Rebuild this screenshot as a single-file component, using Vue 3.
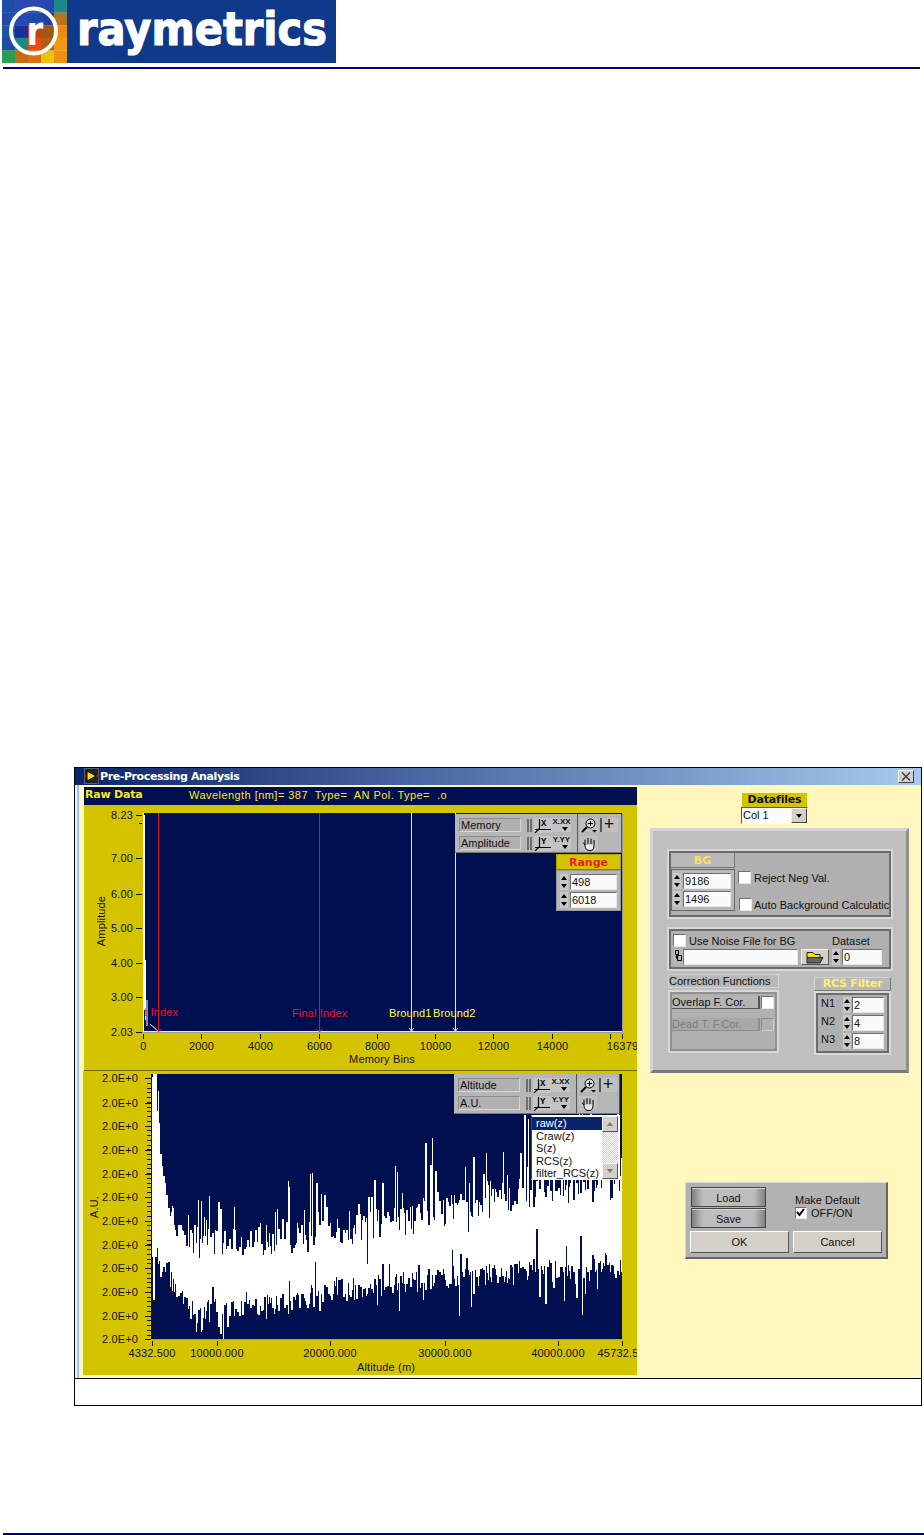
<script setup>
function rng(seed) {
  let a = seed
  return () => {
    a |= 0; a = (a + 0x6d2b79f5) | 0
    let t = Math.imul(a ^ (a >>> 15), 1 | a)
    t = (t + Math.imul(t ^ (t >>> 7), 61 | t)) ^ t
    return ((t ^ (t >>> 14)) >>> 0) / 4294967296
  }
}
function lerp(pts, x) {
  for (let i = 1; i < pts.length; i++) {
    if (x <= pts[i][0]) {
      const [a, b] = pts[i - 1], [c, d] = pts[i]
      return b + ((d - b) * (x - a)) / (c - a)
    }
  }
  return pts[pts.length - 1][1]
}
const upper = [[151,1075],[157,1075],[160,1150],[170,1210],[185,1245],[300,1238],[400,1222],[500,1198],[621,1186]]
const lower = [[151,1250],[160,1262],[175,1290],[190,1310],[250,1306],[300,1300],[320,1292],[400,1282],[500,1272],[621,1262]]
const r = rng(387)
let d = ''
let x = 152
while (x < 622) {
  const w = r() < 0.35 ? 2 : 1
  const reach = 0.55 + (0.65 * (x - 150)) / 470
  let top = lerp(upper, x) + (r() - 0.5) * 30 - Math.pow(r(), 6) * 85 * reach
  let bot = lerp(lower, x) + (r() - 0.5) * 22 + Math.pow(r(), 9) * 40
  if (r() < 0.07) bot -= r() * 30
  if (r() < 0.07) top += r() * 28
  for (let i = 0; i < w && x < 622; i++, x++) {
    d += `M${x + 0.5} ${Math.max(1074, top).toFixed(0)}V${Math.min(1339, bot).toFixed(0)}`
  }
}
const noisePath = d

const tiles = [
  ['#1f4aa8','#2a4ab0','#2a4ab0','#2b46ad','#1b8a88'],
  ['#1f4aa8','#2a46b0','#1b4aa8','#2040a0','#b8741a'],
  ['#1c55a8','#1a2f9a','#c04510','#a05510','#f08a10'],
  ['#1f49a5','#1a8a80','#ee4a10','#b06010','#f09a10'],
  ['#26a050','#c86a10','#d87010','#eec010','#f09010']
].flatMap((row, j) => row.map((fill, i) => ({ fill, x: 2 + i * 13, y: j * 12.6, k: `${i}-${j}` })))

const y1Ticks = [
  { y: 815, t: '8.23' }, { y: 858, t: '7.00' }, { y: 894, t: '6.00' },
  { y: 928, t: '5.00' }, { y: 963, t: '4.00' }, { y: 997, t: '3.00' }, { y: 1032, t: '2.03' }
]
const x1Ticks = [
  { x: 143, t: '0' }, { x: 201, t: '2000' }, { x: 260, t: '4000' }, { x: 319, t: '6000' },
  { x: 377, t: '8000' }, { x: 435, t: '10000' }, { x: 493, t: '12000' }, { x: 552, t: '14000' },
  { x: 610, t: '' }, { x: 622, t: '16379' }
]
const y2Ticks = [1078, 1103, 1126, 1150, 1174, 1197, 1221, 1245, 1268, 1292, 1316, 1339]
const y2Minor = []
for (let y = 1078; y < 1339; y += 4.75) y2Minor.push(Math.round(y))
const x2Ticks = [
  { x: 152, t: '4332.500', l: 152 }, { x: 217, t: '10000.000', l: 217 }, { x: 330, t: '20000.000', l: 330 },
  { x: 445, t: '30000.000', l: 445 }, { x: 558, t: '40000.000', l: 558 }, { x: 622, t: '45732.5', l: 618 }
]
const listItems = ['raw(z)', 'Craw(z)', 'S(z)', 'RCS(z)', 'filter_RCS(z)']
const filters = [{ n: 'N1', v: '2' }, { n: 'N2', v: '4' }, { n: 'N3', v: '8' }]
</script>

<template>
  <div class="page">
    <svg class="defs" width="0" height="0" aria-hidden="true">
      <symbol id="axis" viewBox="0 0 26 15">
        <rect x="8" width="18" height="15" fill="#c4c4c4" />
        <path d="M1 1h2v13H1zM4 1h2v13H4z" fill="#6d6d6d" />
        <path d="M13.500 1V11M9 11.500H25M13 11L9 15" stroke="#000" fill="none" stroke-width="1.200" />
      </symbol>
      <symbol id="zoom" viewBox="0 0 18 15">
        <circle cx="10.500" cy="5.500" r="4.500" fill="#d8d8d8" stroke="#000" />
        <path d="M8 5.500h5M10.500 3v5" stroke="#000" />
        <path d="M7 9L2 14" stroke="#000" stroke-width="2" />
        <path d="M12 12h5l-2.500 2.500z" fill="#000" />
      </symbol>
      <symbol id="hand" viewBox="0 0 18 15">
        <path d="M5 9L3 6.500M5 9V3.500M8 8V2M11 8V2.500M14 8.500V4M5 9C5 13 7 14.500 10 14.500C13 14.500 14 12.500 14 8.500" fill="#e8e8e8" stroke="#000" />
      </symbol>
    </svg>

    <header class="head">
      <svg class="logo" width="336" height="63" viewBox="0 0 336 63" role="img" aria-label="raymetrics">
        <rect x="67" width="269" height="63" fill="#0f3a8c" />
        <rect v-for="c in tiles" :key="c.k" :x="c.x" :y="c.y" width="13" height="12.800" :fill="c.fill" />
        <circle cx="33.500" cy="31" r="22.500" fill="none" stroke="#fff" stroke-width="4" />
        <text transform="translate(35 45) scale(1 1.200)" class="logo-r" text-anchor="middle">r</text>
        <text transform="translate(77 45) scale(1 1.200)" class="logo-t" textLength="250" lengthAdjust="spacingAndGlyphs">raymetrics</text>
      </svg>
    </header>
    <div class="rule top-rule"></div>

    <section class="frame">
      <div class="window">
        <div class="title">
          <svg class="vi" width="15" height="16" viewBox="0 0 15 16">
            <rect x="0.500" y="0.500" width="14" height="15" fill="#222" stroke="#999" stroke-dasharray="1 1" />
            <path d="M3 3L12 8L3 13z" fill="#f7e700" stroke="#000" />
            <path d="M0 8h3M12 8h3" stroke="#e01010" />
          </svg>
          <span class="title-t">Pre-Processing Analysis</span>
          <span class="close"><svg width="14" height="11" viewBox="0 0 14 11"><path d="M3 1.500L11 9.500M11 1.500L3 9.500" stroke="#333" stroke-width="1.200" /></svg></span>
        </div>

        <div class="client">
          <div class="left">
            <div class="raw">
              <span class="raw-h">Raw Data</span>
              <span class="raw-i">Wavelength [nm]= 387&nbsp; Type=&nbsp; AN Pol. Type=&nbsp; .o</span>
            </div>

            <div class="plot p1">
              <svg width="553" height="265" viewBox="84 805 553 265">
                <rect x="143" y="813" width="479" height="219" fill="#000f50" />
                <rect x="143" y="813" width="479" height="1" fill="#111" />
                <rect x="143" y="813" width="1" height="219" fill="#fff" />
                <rect x="622" y="813" width="1" height="220" fill="#9a9a9a" />
                <path d="M144.500 815V1010M145.500 960V1020M147 1000V1026M150 1024L158 1031" stroke="#fff" fill="none" />
                <path d="M158.500 813V1032M319.500 813V1032" stroke="#e01020" />
                <path d="M411.500 813V1032M455.500 813V1032" stroke="#ffff30" />
                <rect x="143" y="1031" width="479" height="1" fill="#ffff30" />
                <rect x="143" y="1032" width="480" height="1" fill="#9a9a9a" />
                <path d="M155 1029l3.500 2.500 3.500-2.500M316 1029l3.500 2.500 3.500-2.500" stroke="#e01020" fill="none" />
                <path d="M409 1028l2.500 3 2.500-3M453 1028l2.500 3 2.500-3" stroke="#ffff30" fill="none" />
                <text x="144" y="1016" class="t red">t Index</text>
                <text x="292" y="1017" class="t red">Final Index</text>
                <text x="389" y="1017" class="t yel">Bround1</text>
                <text x="433" y="1017" class="t yel">Bround2</text>
                <g v-for="k in y1Ticks" :key="k.t">
                  <rect x="136" :y="k.y" width="6" height="1" fill="#111" />
                  <text x="133" :y="k.y + 4" class="t" text-anchor="end">{{ k.t }}</text>
                </g>
                <rect x="139" y="823" width="3" height="1" fill="#111" />
                <g v-for="k in x1Ticks" :key="k.x">
                  <rect :x="k.x" y="1034" width="1" height="5" fill="#111" />
                  <text :x="k.x + 0.500" y="1050" class="t" text-anchor="middle">{{ k.t }}</text>
                </g>
                <text x="382" y="1063" class="t" text-anchor="middle">Memory Bins</text>
                <text transform="translate(105 921) rotate(-90)" class="t" text-anchor="middle">Amplitude</text>
              </svg>

              <div class="pal">
                <div class="pal-a">
                  <div class="pal-r">
                    <span class="pal-f">Memory</span>
                    <svg class="ax" width="26" height="15"><use href="#axis" /><text x="15" y="8" class="mini">X</text></svg>
                    <span class="scale">x.xx<i class="dn"></i></span>
                  </div>
                  <div class="pal-r">
                    <span class="pal-f">Amplitude</span>
                    <svg class="ax" width="26" height="15"><use href="#axis" /><text x="15" y="8" class="mini">Y</text></svg>
                    <span class="scale">y.yy<i class="dn"></i></span>
                  </div>
                </div>
                <div class="pal-b">
                  <div class="pal-r tool-r">
                    <span class="tool"><svg width="18" height="15"><use href="#zoom" /></svg></span>
                    <span class="tool plus">+</span>
                  </div>
                  <div class="pal-r tool-r">
                    <span class="tool"><svg width="18" height="15"><use href="#hand" /></svg></span>
                  </div>
                </div>
              </div>

              <div class="range">
                <div class="range-h">Range</div>
                <div class="range-b">
                  <div class="sf">
                    <span class="spin"><i class="up"></i><i class="dn"></i></span>
                    <span class="num rg">498</span>
                  </div>
                  <div class="sf">
                    <span class="spin"><i class="up"></i><i class="dn"></i></span>
                    <span class="num rg">6018</span>
                  </div>
                </div>
              </div>
            </div>

            <div class="plot p2">
              <svg width="554" height="304" viewBox="83 1071 554 304">
                <rect x="151" y="1074" width="471" height="265" fill="#000f50" />
                <path :d="noisePath" stroke="#fff" stroke-width="1" fill="none" shape-rendering="crispEdges" />
                <rect x="151" y="1339" width="471" height="1" fill="#9a9a9a" />
                <rect v-for="y in y2Minor" :key="'m' + y" x="147" :y="y" width="4" height="1" fill="#111" />
                <g v-for="(y, i) in y2Ticks" :key="i">
                  <rect x="145" :y="y" width="6" height="1" fill="#111" />
                  <text x="138" :y="y + 4" class="t" text-anchor="end">2.0E+0</text>
                </g>
                <g v-for="k in x2Ticks" :key="k.x">
                  <rect :x="k.x" y="1341" width="1" height="5" fill="#111" />
                  <text :x="k.l" y="1357" class="t" text-anchor="middle">{{ k.t }}</text>
                </g>
                <text x="386" y="1371" class="t" text-anchor="middle">Altitude (m)</text>
                <text transform="translate(98 1207) rotate(-90)" class="t" text-anchor="middle">A.U.</text>
              </svg>

              <div class="pal pal2">
                <div class="pal-a">
                  <div class="pal-r">
                    <span class="pal-f">Altitude</span>
                    <svg class="ax" width="26" height="15"><use href="#axis" /><text x="15" y="8" class="mini">X</text></svg>
                    <span class="scale">x.xx<i class="dn"></i></span>
                  </div>
                  <div class="pal-r">
                    <span class="pal-f">A.U.</span>
                    <svg class="ax" width="26" height="15"><use href="#axis" /><text x="15" y="8" class="mini">Y</text></svg>
                    <span class="scale">y.yy<i class="dn"></i></span>
                  </div>
                </div>
                <div class="pal-b">
                  <div class="pal-r tool-r">
                    <span class="tool"><svg width="18" height="15"><use href="#zoom" /></svg></span>
                    <span class="tool plus">+</span>
                  </div>
                  <div class="pal-r tool-r">
                    <span class="tool"><svg width="18" height="15"><use href="#hand" /></svg></span>
                  </div>
                </div>
              </div>

              <div class="list">
                <div class="list-items">
                  <div v-for="(it, i) in listItems" :key="it" class="li" :class="{ sel: i === 0 }">{{ it }}</div>
                </div>
                <div class="sb">
                  <span class="sb-btn"><i class="up mute"></i></span>
                  <span class="sb-track"></span>
                  <span class="sb-btn"><i class="dn mute"></i></span>
                </div>
              </div>
            </div>
          </div>

          <div class="right">
            <div class="dataf">
              <div class="dataf-h">Datafiles</div>
              <div class="combo"><span class="combo-t">Col 1</span><span class="combo-b"><i class="dn"></i></span></div>
            </div>

            <div class="gray">
              <div class="well w-bg">
                <div class="bg-l">
                  <div class="bg-h">BG</div>
                  <div class="bg-b">
                    <div class="sf"><span class="spin"><i class="up"></i><i class="dn"></i></span><span class="num bgn">9186</span></div>
                    <div class="sf"><span class="spin"><i class="up"></i><i class="dn"></i></span><span class="num bgn">1496</span></div>
                  </div>
                </div>
                <div class="bg-r">
                  <label class="ckl first"><span class="ck"></span><span>Reject Neg Val.</span></label>
                  <label class="ckl second"><span class="ck"></span><span>Auto Background Calculatic</span></label>
                </div>
              </div>

              <div class="well w-noise">
                <div class="n-r1">
                  <label class="ckl n-ck"><span class="ck"></span><span>Use Noise File for BG</span></label>
                  <span>Dataset</span>
                </div>
                <div class="n-r2">
                  <span class="path-i"><svg width="10" height="14" viewBox="0 0 10 14"><path d="M2.500 1.500h3v4h-3zM4.500 6.500h4v5h-4zM3.500 5.500v4h1" fill="none" stroke="#000" /></svg></span>
                  <span class="num path-f"></span>
                  <span class="folder"><svg width="20" height="13" viewBox="0 0 20 13"><path d="M2 1.500h6l2 2h5v3H2z" fill="#f8e800" stroke="#222" /><path d="M2 6.500h16l-3 5.500H2z" fill="#666" stroke="#222" /></svg></span>
                  <span class="spin sm"><i class="up"></i><i class="dn"></i></span>
                  <span class="num ds">0</span>
                </div>
              </div>

              <div class="lower">
                <div class="corr">
                  <div class="corr-h">Correction Functions</div>
                  <div class="well corr-b">
                    <div class="corr-r"><span class="corr-btn">Overlap F. Cor.</span><span class="ck"></span></div>
                    <div class="corr-r off"><span class="corr-btn">Dead T. F.Cor.</span><span class="ck"></span></div>
                  </div>
                </div>
                <div class="rcs">
                  <div class="rcs-h">RCS Filter</div>
                  <div class="well rcs-b">
                    <div v-for="f in filters" :key="f.n" class="rcs-r">
                      <span class="rcs-n">{{ f.n }}</span>
                      <span class="spin"><i class="up"></i><i class="dn"></i></span>
                      <span class="num rcs-f">{{ f.v }}</span>
                    </div>
                  </div>
                </div>
              </div>
            </div>

            <div class="load">
              <div class="load-top">
                <div class="load-btns">
                  <span class="lb">Load</span>
                  <span class="lb">Save</span>
                </div>
                <div class="md">
                  <div>Make Default</div>
                  <label class="ckl md-ck">
                    <span class="ck on"><svg width="11" height="11" viewBox="0 0 11 11"><path d="M2 5l2.500 3L9 2" fill="none" stroke="#000" stroke-width="2" /></svg></span>
                    <span>OFF/ON</span>
                  </label>
                </div>
              </div>
              <div class="load-bot">
                <span class="bt ok">OK</span>
                <span class="bt cancel">Cancel</span>
              </div>
            </div>
          </div>
        </div>
      </div>
    </section>

    <div class="rule bottom-rule"></div>
  </div>
</template>

<style>
html, body { margin: 0; background: #fff; }
</style>

<style scoped>
.page {
  width: 924px;
  height: 1535px;
  display: flex;
  flex-direction: column;
  background: #fff;
  overflow: hidden;
  font: 11px "Liberation Sans", Arial, sans-serif;
  color: #111;
}
.defs { position: absolute; }
.head { height: 63px; }
.logo { display: block; }
.logo-r { font: 700 34px "DejaVu Sans", sans-serif; fill: #fff; }
.logo-t { font: 700 38px "DejaVu Sans", sans-serif; fill: #fff; stroke: #fff; stroke-width: 1px; }
.rule { height: 2px; background: #00007f; }
.top-rule { margin: 4px 4px 0 3px; }
.bottom-rule { margin: auto 0 0 3px; }

.frame {
  margin: 698px 0 0 74px;
  width: 848px;
  height: 639px;
  box-sizing: border-box;
  border: 1px solid #000;
}
.window {
  height: 610px;
  border-bottom: 1px solid #000;
  display: flex;
  flex-direction: column;
}
.title {
  height: 17px;
  flex: none;
  display: flex;
  align-items: center;
  padding: 0 0 1px 9px;
  box-sizing: border-box;
  background: linear-gradient(to right, #0a246a, #a6caf0);
}
.vi { flex: none; }
.title-t { margin-left: 1px; font: 700 11px "DejaVu Sans", sans-serif; color: #fff; letter-spacing: -0.4px; }
.close {
  margin-left: auto;
  margin-right: 7px;
  width: 16px;
  height: 13px;
  box-sizing: border-box;
  background: #d4d0c8;
  border: 1px solid;
  border-color: #fff #404040 #404040 #fff;
  display: flex;
  align-items: center;
  justify-content: center;
}
.client {
  flex: 1;
  display: flex;
  padding-left: 8px;
  background: linear-gradient(to right, #f1f3f5 0 2px, #9fc3ea 2px 4px, #f4ecd6 4px 5px, #fff7bc 5px);
}

.left { width: 554px; flex: none; display: flex; flex-direction: column; }
.raw {
  margin: 2px 0 0 1px;
  height: 18px;
  width: 553px;
  box-sizing: border-box;
  background: #000f50;
  display: flex;
  align-items: center;
  color: #ffe820;
  padding: 0 0 3px 1px;
}
.raw-h { width: 104px; font: 700 11px "DejaVu Sans", sans-serif; letter-spacing: -0.2px; }
.raw-i { font-size: 11px; letter-spacing: 0.45px; white-space: nowrap; }
.plot { position: relative; background: #d4c400; }
.plot svg { display: block; }
.p1 { margin-left: 1px; width: 553px; height: 265px; border-bottom: 1px solid #6e6600; box-sizing: content-box; }
.p2 { width: 554px; height: 304px; }
.t { font: 11px "Liberation Sans", sans-serif; fill: #111; letter-spacing: 0.15px; }
.t.red { fill: #f01020; }
.t.yel { fill: #ffff30; }
.mini { font: 700 9px "Liberation Mono", monospace; fill: #000; }

.pal {
  position: absolute;
  left: 371px;
  top: 9px;
  width: 167px;
  height: 39px;
  display: flex;
  background: #b6b6b6;
  box-sizing: border-box;
  border-right: 1px solid #555;
  border-bottom: 1px solid #777;
}
.pal2 { top: 3px; width: 166px; height: 40px; }
.pal-a { width: 123px; flex: none; box-sizing: border-box; border-right: 1px solid #555; padding: 4px 0 0 4px; }
.pal-b { flex: 1; padding: 4px 0 0 2px; }
.pal-r { display: flex; height: 14px; margin-bottom: 4px; align-items: stretch; }
.pal-f {
  width: 62px;
  box-sizing: border-box;
  border: 1px solid;
  border-color: #8c8c8c #d6d6d6 #d6d6d6 #8c8c8c;
  line-height: 12px;
  padding-left: 1px;
  background: #b0b0b0;
}
.ax { margin-left: 5px; flex: none; }
.scale {
  width: 19px;
  position: relative;
  background: #c4c4c4;
  font: 700 8px "Liberation Sans", sans-serif;
  line-height: 8px;
  text-align: center;
  text-transform: uppercase;
  white-space: nowrap;
  overflow: hidden;
}
.scale .dn { position: absolute; right: 3px; bottom: 1px; }
.tool-r { gap: 2px; }
.tool {
  width: 18px;
  height: 14px;
  background: #c0c0c0;
  display: block;
}
.plus { font-size: 18px; line-height: 12px; text-align: center; box-shadow: inset 2px 0 0 #555; }

.up, .dn { display: inline-block; width: 0; height: 0; border: 3px solid transparent; border-left-width: 3px; border-right-width: 3px; }
.up { border-top: 0; border-bottom: 4px solid #000; }
.dn { border-bottom: 0; border-top: 4px solid #000; }
.up.mute { border-bottom-color: #777; }
.dn.mute { border-top-color: #777; }

.range { position: absolute; left: 472px; top: 49px; width: 65px; }
.range-h {
  height: 16px;
  background: #d4c400;
  border: 1px solid #b0a400;
  border-bottom: 1px solid #777;
  box-sizing: border-box;
  text-align: center;
  font: 700 11px "DejaVu Sans", sans-serif;
  color: #ee1c25;
  line-height: 15px;
}
.range-b {
  height: 41px;
  box-sizing: border-box;
  background: #b6b6b6;
  border: 1px solid #999;
  padding: 3px 3px;
  display: flex;
  flex-direction: column;
  gap: 2px;
}
.sf { display: flex; gap: 2px; align-items: stretch; height: 16px; }
.spin {
  width: 8px;
  flex: none;
  display: flex;
  flex-direction: column;
  align-items: center;
  justify-content: space-around;
  background: linear-gradient(#c8c8c8 0 47%, #808080 47% 53%, #c8c8c8 53%);
}
.num {
  display: block;
  box-sizing: border-box;
  background: #fbfbfb;
  border: 1px solid;
  border-color: #707070 #e8e8e8 #e8e8e8 #707070;
  line-height: 14px;
  padding-left: 1px;
  color: #111;
}
.rg { width: 50px; }

.p2 .list {
  position: absolute;
  left: 448px;
  top: 44px;
  width: 89px;
  height: 65px;
  box-sizing: border-box;
  background: #fff;
  border: 1px solid #fff;
  border-left: 1px solid #444;
  border-top: 1px solid #fff;
  display: flex;
}
.list-items { width: 70px; padding-top: 1px; flex: none; overflow: hidden; }
.li { height: 12.600px; line-height: 12.600px; padding-left: 4px; white-space: nowrap; font-size: 11px; }
.li.sel { background: #0a246a; color: #fff; }
.sb {
  flex: 1;
  display: flex;
  flex-direction: column;
  background: repeating-conic-gradient(#d4d0c8 0 25%, #fff 0 50%) 0 0 / 2px 2px;
  margin-right: 1px;
}
.sb-btn {
  height: 16px;
  background: #d4d0c8;
  border: 1px solid;
  border-color: #f4f4f4 #555 #555 #f4f4f4;
  box-sizing: border-box;
  display: flex;
  align-items: center;
  justify-content: center;
}
.sb-track { flex: 1; }

.right { flex: 1; min-width: 0; }
.dataf { margin: 8px 0 0 104px; width: 67px; }
.dataf-h {
  margin-left: 1px;
  width: 65px;
  height: 14px;
  background: #d4c400;
  text-align: center;
  font: 700 11px "DejaVu Sans", sans-serif;
  line-height: 14px;
  letter-spacing: -0.2px;
  color: #111;
}
.combo {
  height: 17px;
  box-sizing: border-box;
  background: #fbfbfb;
  border: 1px solid;
  border-color: #555 #fff #fff #555;
  display: flex;
}
.combo-t { flex: 1; line-height: 15px; padding-left: 1px; }
.combo-b {
  width: 16px;
  background: #d4d0c8;
  border: 1px solid;
  border-color: #f4f4f4 #444 #444 #f4f4f4;
  box-sizing: border-box;
  display: flex;
  align-items: center;
  justify-content: center;
}
.gray {
  margin: 4px 0 0 13px;
  width: 259px;
  height: 245px;
  box-sizing: border-box;
  background: #bfbfbf;
  border: 3px solid;
  border-color: #d4d4d4 #909090 #7a7a7a #d4d4d4;
  padding: 18px 0 0 14px;
}
.well {
  box-sizing: border-box;
  background: #b0b0b0;
  border: 2px solid #d8d8d8;
  box-shadow: inset 0 0 0 2px #6c6c6c;
  padding: 2px;
}
.w-bg { width: 226px; height: 70px; display: flex; }
.bg-l { width: 64px; flex: none; }
.bg-h {
  height: 15px;
  background: #b8b8b8;
  border-right: 1px solid #777;
  border-bottom: 1px solid #777;
  box-sizing: border-box;
  text-align: center;
  font: 700 11px "DejaVu Sans", sans-serif;
  color: #ffe060;
  line-height: 15px;
}
.bg-b {
  margin-top: 1px;
  height: 42px;
  box-sizing: border-box;
  border: 1px solid #666;
  padding: 3px 1px;
  display: flex;
  flex-direction: column;
  gap: 2px;
  background: #b8b8b8;
}
.bgn { width: 48px; }
.bg-r { padding-left: 3px; min-width: 0; overflow: hidden; flex: 1; }
.ckl { display: flex; align-items: center; gap: 3px; white-space: nowrap; }
.ck {
  width: 13px;
  height: 13px;
  flex: none;
  box-sizing: border-box;
  background: #fff;
  border: 1px solid;
  border-color: #707070 #e8e8e8 #e8e8e8 #707070;
  display: block;
}
.first { margin-top: 18px; }
.second { margin-top: 14px; margin-left: 1px; gap: 2px; }
.w-noise { margin-top: 8px; width: 226px; height: 44px; }
.n-r1 { display: flex; height: 15px; align-items: center; padding-top: 2px; }
.n-ck { width: 159px; margin-left: 2px; }
.n-r2 { display: flex; align-items: stretch; height: 16px; margin: 1px 0 0 2px; }
.path-i { width: 10px; flex: none; background: #b8b8b8; }
.path-f { width: 115px; }
.folder {
  margin: 0 3px;
  width: 28px;
  box-sizing: border-box;
  background: #d4d0c8;
  border: 1px solid;
  border-color: #f4f4f4 #555 #555 #f4f4f4;
  display: flex;
  align-items: center;
  justify-content: center;
}
.sm { margin-right: 2px; }
.ds { width: 40px; }

.lower { display: flex; margin-top: 3px; }
.corr { width: 111px; flex: none; margin-left: 1px; }
.corr-h {
  height: 14px;
  box-sizing: border-box;
  border: 1px solid #d4d4d4;
  background: #b8b8b8;
  line-height: 12px;
  white-space: nowrap;
  overflow: hidden;
}
.corr-b { margin-top: 2px; height: 63px; padding: 2px; box-shadow: inset 0 0 0 2px #909090; }
.corr-r { display: flex; gap: 1px; height: 13px; margin: 2px 0 9px 0; }
.corr-btn {
  width: 88px;
  box-sizing: border-box;
  background: #b4b4b4;
  border-right: 2px solid #555;
  border-bottom: 1px solid #555;
  line-height: 12px;
  white-space: nowrap;
}
.off .corr-btn { color: #7d7d7d; border-color: #8c8c8c; background: #a8a8a8; }
.off .ck { background: #b0b0b0; border-color: #909090 #d0d0d0 #d0d0d0 #909090; }
.rcs { margin: 3px 0 0 35px; width: 77px; }
.rcs-h {
  height: 14px;
  box-sizing: border-box;
  background: #b8b8b8;
  border: 1px solid #d4d4d4;
  border-right-color: #777;
  border-bottom-color: #777;
  text-align: center;
  font: 700 11px "DejaVu Sans", sans-serif;
  color: #fff070;
  line-height: 12px;
  letter-spacing: -0.2px;
}
.rcs-b { height: 64px; }
.rcs-r { display: flex; height: 16px; margin-top: 2px; }
.rcs-n { width: 25px; flex: none; padding-left: 3px; box-sizing: border-box; line-height: 13px; }
.rcs-f { width: 32px; margin-left: 1px; }

.load {
  margin: 109px 0 0 48px;
  width: 203px;
  height: 77px;
  box-sizing: border-box;
  background: #b2b2b2;
  border: 1px solid #d8d8d8;
  border-right: 2px solid #666;
  border-bottom: 2px solid #666;
  padding: 4px 0 0 4px;
}
.load-top { display: flex; }
.load-btns {
  width: 75px;
  height: 41px;
  flex: none;
  margin-left: 1px;
  display: flex;
  flex-direction: column;
}
.lb {
  height: 20px;
  margin-bottom: 1px;
  box-sizing: border-box;
  border: 1px solid #444;
  background: linear-gradient(to right, #808080, #bdbdbd 15%, #bdbdbd 85%, #808080);
  box-shadow: inset 0 1px 0 #d8d8d8;
  text-align: center;
  line-height: 21px;
}
.md { margin: 7px 0 0 29px; }
.md-ck { margin-top: 1px; gap: 4px; }
.md-ck .ck { width: 12px; height: 12px; position: relative; }
.md-ck svg { display: block; position: absolute; left: -1px; top: -1px; }
.load-bot { display: flex; gap: 4px; margin-top: 3px; }
.bt {
  height: 22px;
  box-sizing: border-box;
  background: #d4d0c8;
  border: 1px solid;
  border-color: #fff #555 #555 #fff;
  text-align: center;
  line-height: 21px;
}
.ok { width: 99px; }
.cancel { width: 89px; }
</style>
